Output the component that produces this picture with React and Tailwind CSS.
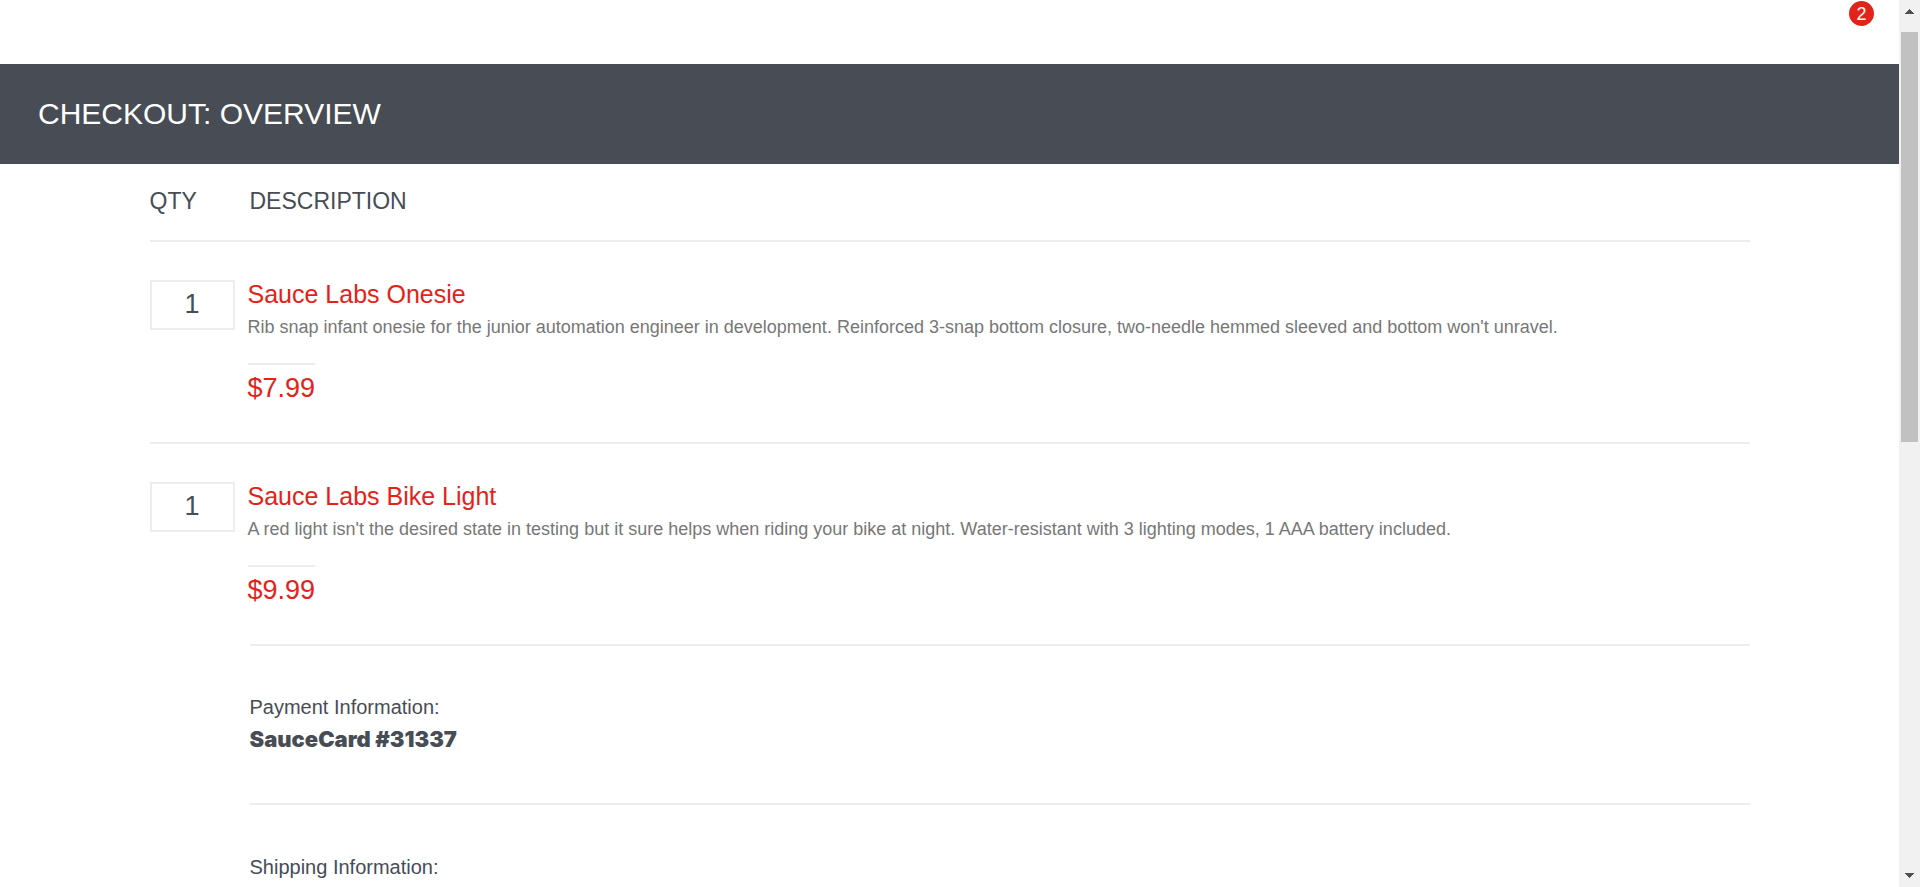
const items = [
  {
    qty: 1,
    name: "Sauce Labs Onesie",
    description:
      "Rib snap infant onesie for the junior automation engineer in development. Reinforced 3-snap bottom closure, two-needle hemmed sleeved and bottom won't unravel.",
    price: "$7.99",
  },
  {
    qty: 1,
    name: "Sauce Labs Bike Light",
    description:
      "A red light isn't the desired state in testing but it sure helps when riding your bike at night. Water-resistant with 3 lighting modes, 1 AAA battery included.",
    price: "$9.99",
  },
];

function CartItem({ item }) {
  return (
    <li className="group">
      <div className="flex min-h-[200px] gap-[13px] pt-[38px]">
        <div className="h-[50px] w-[85px] shrink-0 border-2 border-[#ededed] text-center text-[27px] leading-[44px]">
          {item.qty}
        </div>
        <div className="min-w-0">
          <a href="#item" className="block text-[25px] leading-[28px] text-[#e2231a]">
            {item.name}
          </a>
          <p className="mt-1 text-[18px] leading-[30px] text-[#777777]">{item.description}</p>
          <div className="mt-[21px] inline-block border-t-2 border-[#ededed] pt-2 text-[27px] leading-[30px] text-[#e2231a]">
            {item.price}
          </div>
        </div>
      </div>
      <div className="h-[2px] bg-[#ededed] group-last:ml-[100px]" />
    </li>
  );
}

function ScrollRail() {
  return (
    <div aria-hidden="true" className="flex w-[21px] shrink-0 flex-col items-center bg-[#f1f1f1]">
      <div className="flex h-8 w-full shrink-0 justify-center pt-[9px]">
        <svg width="9" height="5" viewBox="0 0 9 5" fill="#505050" shapeRendering="crispEdges">
          <path d="M4 0h1v1h1v1h1v1h1v1h1v1H0V4h1V3h1V2h1V1h1z" />
        </svg>
      </div>
      <div className="h-[410px] w-[17px] bg-[#c1c1c1]" />
      <div className="mt-auto pb-[9px]">
        <svg className="block" width="9" height="5" viewBox="0 0 9 5" fill="#505050" shapeRendering="crispEdges">
          <path d="M0 0h9v1H8v1H7v1H6v1H5v1H4V4H3V3H2V2H1V1H0z" />
        </svg>
      </div>
    </div>
  );
}

export default function App() {
  return (
    <div className="flex h-screen bg-white font-['Liberation_Sans',Arial,sans-serif] text-[#474c55]">
      <div className="min-w-0 flex-1 overflow-y-auto [scrollbar-width:none]">
        <header className="flex h-16 justify-end pt-px pr-[25px]">
          <a
            href="#cart"
            aria-label="Cart, 2 items"
            className="flex size-[25px] items-center justify-center rounded-full bg-[#e2231a] text-[18px] leading-[24px] text-white"
          >
            2
          </a>
        </header>
        <h1 className="flex h-[100px] items-center bg-[#474c55] px-[38px] text-[30px] leading-[36px] text-white">
          CHECKOUT: OVERVIEW
        </h1>
        <main className="mx-auto max-w-[1600px]">
          <div className="flex h-[76px] pt-[22px] text-[23px] leading-[30px]">
            <div className="w-[100px]">QTY</div>
            <div>DESCRIPTION</div>
          </div>
          <div className="h-[2px] bg-[#ededed]" />
          <ul>
            {items.map((item) => (
              <CartItem key={item.name} item={item} />
            ))}
          </ul>
          <div className="ml-[100px] text-[20px] leading-[32px]">
            <section className="border-b-2 border-[#ededed] pt-[45px] pb-12">
              <h2>Payment Information:</h2>
              <p className="font-[Inter,sans-serif] text-[22px] font-black">SauceCard #31337</p>
            </section>
            <section className="pt-[46px]">
              <h2>Shipping Information:</h2>
            </section>
          </div>
        </main>
      </div>
      <ScrollRail />
    </div>
  );
}
